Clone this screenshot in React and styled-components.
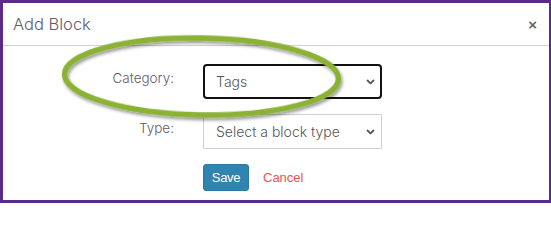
import React from "react";
import styled, { createGlobalStyle } from "styled-components";

const GlobalStyle = createGlobalStyle`
  html, body {
    margin: 0;
    padding: 0;
    background: #ffffff;
  }
  * {
    box-sizing: border-box;
  }
`;

export default function App() {
  return (
    <>
      <GlobalStyle />
      <Frame>
        <Header>
          <Title>Add Block</Title>
          <Close aria-label="Close">×</Close>
        </Header>
        <Body>
          <Form>
            <Label htmlFor="category">Category:</Label>
            <SelectWrap>
              <Select id="category" focused defaultValue="tags">
                <option value="tags">Tags</option>
              </Select>
              <Chevron />
            </SelectWrap>

            <Label htmlFor="type">Type:</Label>
            <SelectWrap>
              <Select id="type" defaultValue="">
                <option value="">Select a block type</option>
              </Select>
              <Chevron />
            </SelectWrap>

            <span />
            <Actions>
              <SaveButton>Save</SaveButton>
              <CancelLink href="#">Cancel</CancelLink>
            </Actions>
          </Form>
        </Body>
        <Highlight width="551" height="203" viewBox="0 0 551 203">
          <defs>
            <filter id="shadow" x="-10%" y="-30%" width="120%" height="160%">
              <feDropShadow dx="1.5" dy="2.5" stdDeviation="1.6" floodColor="#000" floodOpacity="0.4" />
            </filter>
          </defs>
          <ellipse
            cx="201.5"
            cy="76.5"
            rx="137"
            ry="38.5"
            transform="rotate(1 201.5 76.5)"
            fill="none"
            stroke="#8bb236"
            strokeWidth="5.5"
            filter="url(#shadow)"
          />
        </Highlight>
      </Frame>
    </>
  );
}

function Chevron() {
  return (
    <Arrow width="9" height="6" viewBox="0 0 9 6">
      <path d="M1.5 1.5 L4.5 4.3 L7.5 1.5" fill="none" stroke="#555" strokeWidth="1.8" strokeLinecap="round" strokeLinejoin="round" />
    </Arrow>
  );
}

const Frame = styled.div`
  position: relative;
  width: 551px;
  height: 203px;
  background: #ffffff;
  border: 3px solid #5c2a88;
  border-right-width: 2px;
  font-family: Inter, "Open Sans", sans-serif;
  overflow: hidden;
`;

const Header = styled.div`
  display: flex;
  align-items: center;
  justify-content: space-between;
  height: 43px;
  padding: 0 12px 0 10px;
  border-bottom: 1px solid #d2d2d2;
`;

const Title = styled.h4`
  margin: 0;
  font-size: 16.5px;
  font-weight: 300;
  color: #615b6c;
`;

const Close = styled.button`
  border: none;
  background: none;
  padding: 0;
  font-family: "Liberation Sans", Arial, sans-serif;
  font-size: 15px;
  font-weight: 700;
  line-height: 1;
  color: #666;
  cursor: pointer;
`;

const Body = styled.div`
  padding: 18px 0 0;
`;

const Form = styled.div`
  display: grid;
  grid-template-columns: 171px 179px;
  column-gap: 29px;
  row-gap: 15px;
  align-items: start;
`;

const Label = styled.label`
  justify-self: end;
  padding-top: 6px;
  font-size: 13.5px;
  font-weight: 300;
  color: #5f5a69;
`;

const SelectWrap = styled.div`
  position: relative;
  height: 35px;
`;

const Select = styled.select`
  width: 100%;
  height: 35px;
  appearance: none;
  background: #fff;
  padding: 0 26px 0 ${(p) => (p.focused ? "11px" : "12px")};
  border: ${(p) => (p.focused ? "2px solid #111" : "1px solid #cfcfcf")};
  border-radius: ${(p) => (p.focused ? "4px" : "1px")};
  font-family: Inter, "Open Sans", sans-serif;
  font-size: 14px;
  font-weight: 300;
  color: #555;
  outline: none;
`;

const Arrow = styled.svg`
  position: absolute;
  right: 7px;
  top: 15px;
  pointer-events: none;
`;

const Actions = styled.div`
  display: flex;
  align-items: center;
  gap: 14px;
`;

const SaveButton = styled.button`
  height: 27px;
  width: 46px;
  border: 1px solid #2a7aa3;
  border-radius: 3px;
  background: #2f84b0;
  color: #fff;
  font-family: "Liberation Sans", Arial, sans-serif;
  font-size: 13px;
  letter-spacing: -0.3px;
  padding: 0;
`;

const CancelLink = styled.a`
  font-family: "Liberation Sans", Arial, sans-serif;
  font-size: 13px;
  color: #ee5152;
  text-decoration: none;
`;

const Highlight = styled.svg`
  position: absolute;
  left: -3px;
  top: -3px;
  pointer-events: none;
`;
